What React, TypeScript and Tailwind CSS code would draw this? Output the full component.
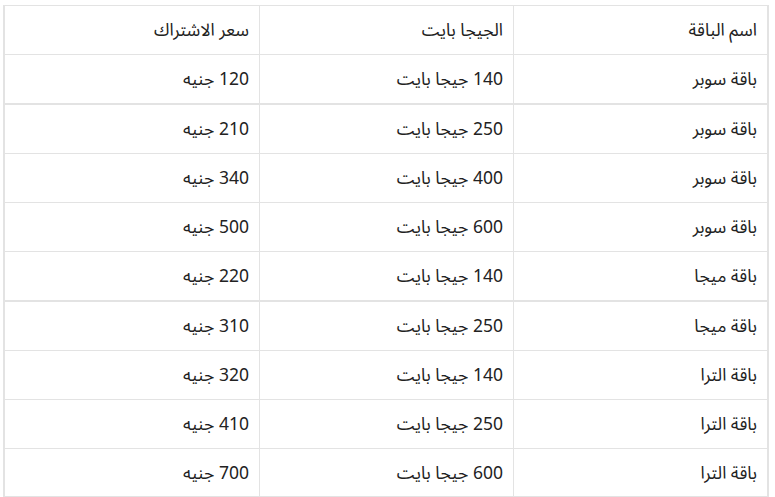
import React from "react";

const rows: { name: string; gb: string; price: string; thick?: boolean }[] = [
  { name: "باقة سوبر", gb: "140 جيجا بايت", price: "120 جنيه", thick: true },
  { name: "باقة سوبر", gb: "250 جيجا بايت", price: "210 جنيه" },
  { name: "باقة سوبر", gb: "400 جيجا بايت", price: "340 جنيه" },
  { name: "باقة سوبر", gb: "600 جيجا بايت", price: "500 جنيه" },
  { name: "باقة ميجا", gb: "140 جيجا بايت", price: "220 جنيه", thick: true },
  { name: "باقة ميجا", gb: "250 جيجا بايت", price: "310 جنيه" },
  { name: "باقة الترا", gb: "140 جيجا بايت", price: "320 جنيه" },
  { name: "باقة الترا", gb: "250 جيجا بايت", price: "410 جنيه" },
  { name: "باقة الترا", gb: "600 جيجا بايت", price: "700 جنيه", last: true } as any,
];

function Row({ cells, thick, last }: { cells: string[]; thick?: boolean; last?: boolean }) {
  return (
    <div
      className={
        "grid grid-cols-3 border-[#e3e3e3] " +
        (thick ? "border-b-2 h-[50px]" : last ? "border-b h-[48px]" : "border-b h-[49px]")
      }
    >
      {cells.map((c, i) => (
        <div
          key={i}
          className={
            "flex items-center pr-[10px] pt-[3px] text-[17.5px] text-[#222222] " +
            (i < 2 ? "border-l border-[#e3e3e3]" : "")
          }
        >
          {c}
        </div>
      ))}
    </div>
  );
}

export default function App() {
  return (
    <div
      className="w-[775px] h-[497px] bg-white overflow-hidden pt-[5px] pl-[3px]"
      style={{ fontFamily: '"Noto Sans Arabic", "DejaVu Sans", sans-serif' }}
    >
      <div dir="rtl" className="w-[766px] border-t border-x-2 border-[#e3e3e3]">
        <Row cells={["اسم الباقة", "الجيجا بايت", "سعر الاشتراك"]} />
        {rows.map((r: any, i) => (
          <Row key={i} cells={[r.name, r.gb, r.price]} thick={r.thick} last={r.last} />
        ))}
      </div>
    </div>
  );
}
